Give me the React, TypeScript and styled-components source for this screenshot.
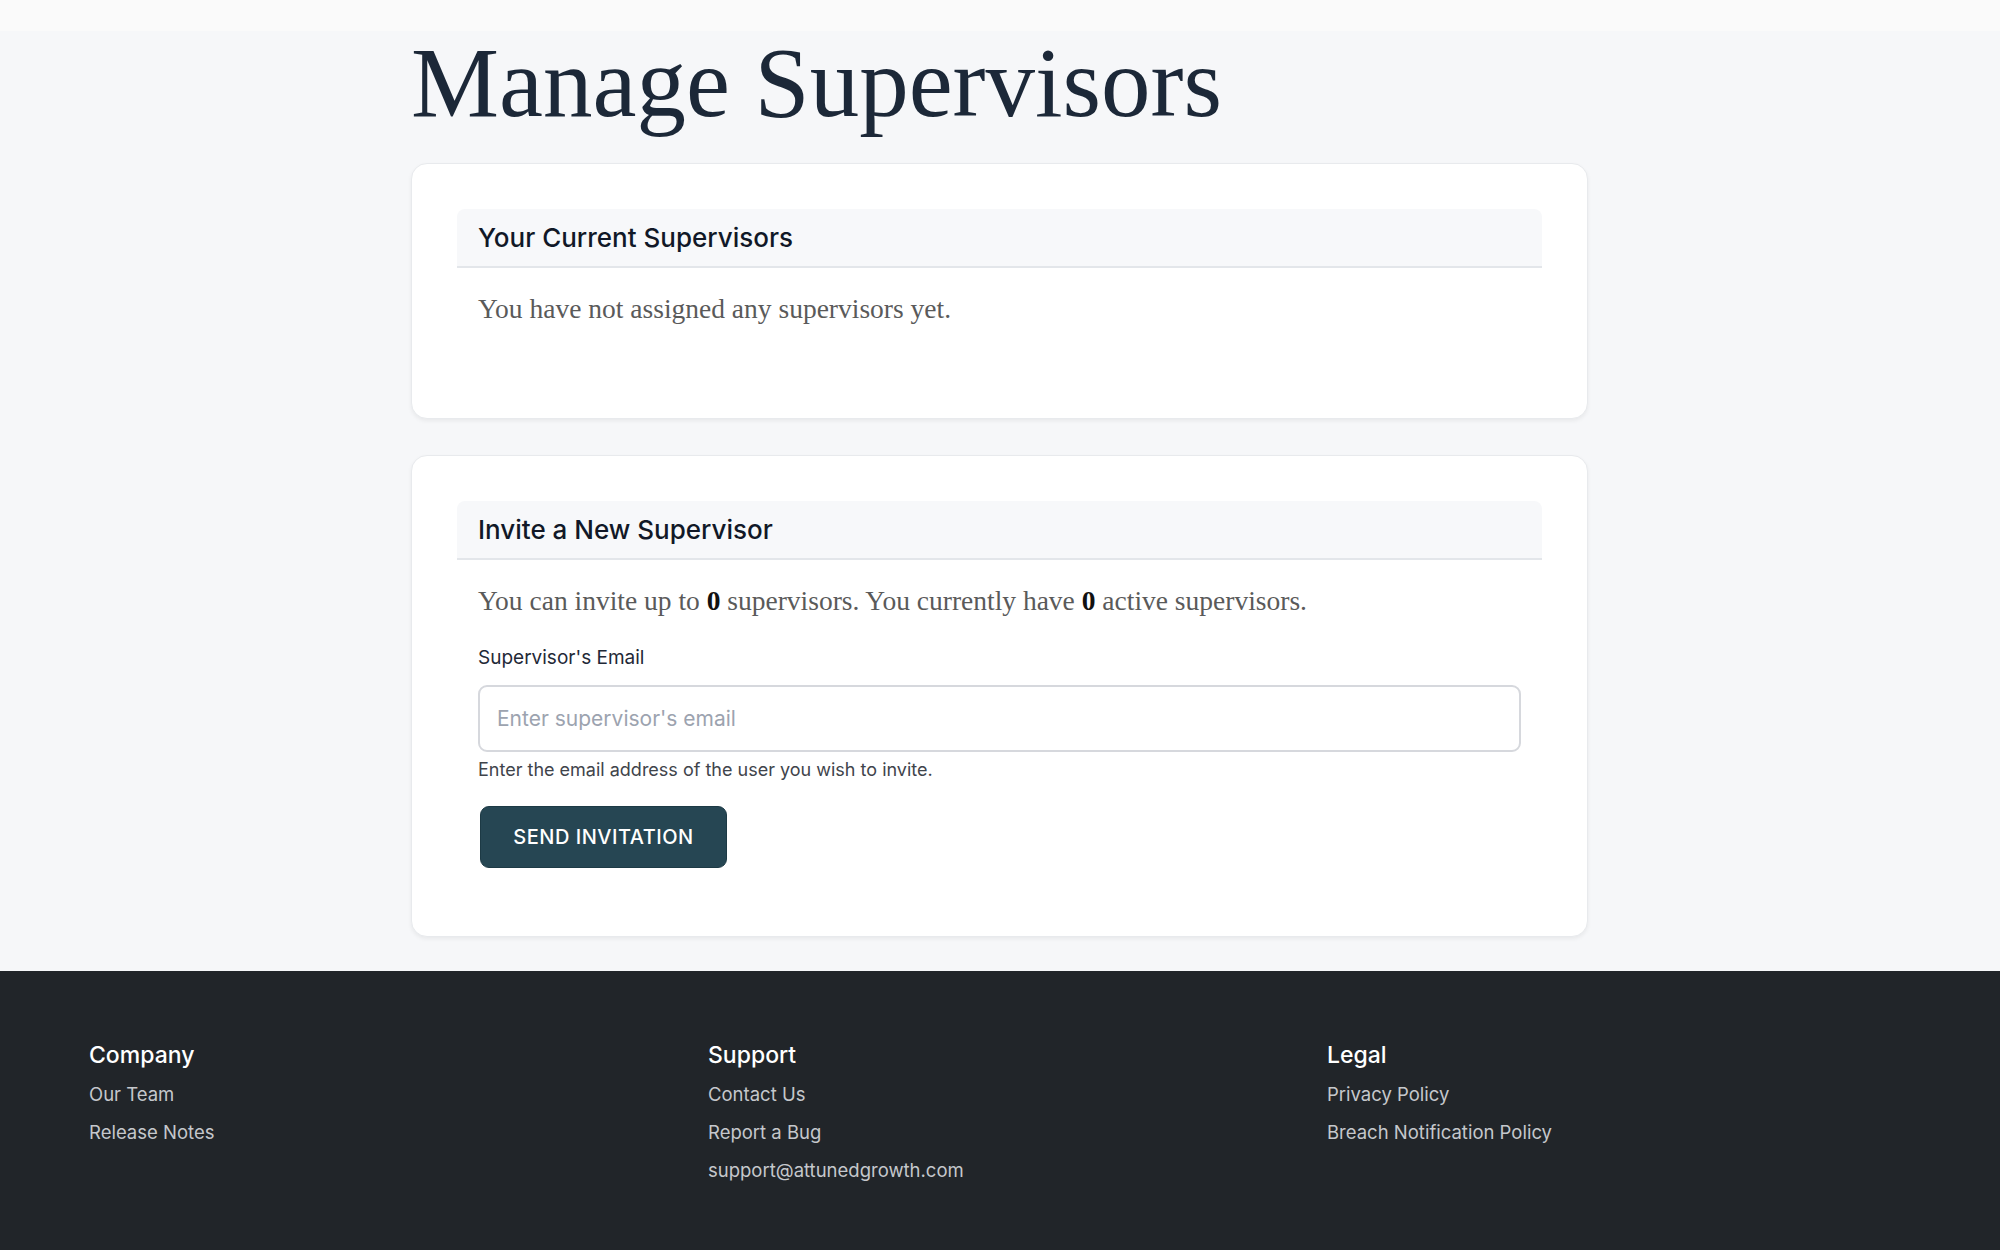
import styled, { createGlobalStyle } from "styled-components";
import { FC } from "react";

const GlobalStyle = createGlobalStyle`
    html, body {
        margin: 0;
        padding: 0;
        background: #f6f7f9;
    }
    body {
        font-family: Inter, "Noto Sans", sans-serif;
        color: #1f2937;
    }
    * {
        box-sizing: border-box;
    }
`;

const footerColumns = [
    { title: "Company", links: ["Our Team", "Release Notes"] },
    { title: "Support", links: ["Contact Us", "Report a Bug", "support@attunedgrowth.com"] },
    { title: "Legal", links: ["Privacy Policy", "Breach Notification Policy"] },
];

const App: FC = () => {
    return <>
        <GlobalStyle />
        <TopBar />
        <Main>
            <Title>Manage Supervisors</Title>
            <Card>
                <CardHeader>
                    <CardTitle>Your Current Supervisors</CardTitle>
                </CardHeader>
                <BodyText $spacing={43}>You have not assigned any supervisors yet.</BodyText>
            </Card>
            <Card $extraBottom={22}>
                <CardHeader>
                    <CardTitle>Invite a New Supervisor</CardTitle>
                </CardHeader>
                <BodyText $spacing={23}>
                    You can invite up to <b>0</b> supervisors. You currently have <b>0</b> active supervisors.
                </BodyText>
                <Field>
                    <Label htmlFor="supervisor-email">Supervisor's Email</Label>
                    <EmailInput id="supervisor-email" type="email" placeholder="Enter supervisor's email" />
                    <Hint>Enter the email address of the user you wish to invite.</Hint>
                </Field>
                <SendButton type="button">SEND INVITATION</SendButton>
            </Card>
        </Main>
        <Footer>
            {footerColumns.map((col) => (
                <FooterColumn key={col.title}>
                    <FooterHeading>{col.title}</FooterHeading>
                    {col.links.map((link) => (
                        <FooterLink key={link} href="#">{link}</FooterLink>
                    ))}
                </FooterColumn>
            ))}
        </Footer>
    </>
}

const TopBar = styled.div`
    height: 31px;
    background: #fafafa;
`;

const Main = styled.main`
    width: 1177px;
    margin: 0 auto 0 411px;
    padding-bottom: 34px;
    display: flex;
    flex-direction: column;
    gap: 36px;
`;

const Title = styled.h1`
    margin: 0 0 -8px;
    font-family: "Liberation Serif", serif;
    font-weight: 400;
    font-size: 99px;
    line-height: 104px;
    color: #1c2838;
`;

const Card = styled.section<{ $extraBottom?: number }>`
    background: #fff;
    border: 1px solid #e8eaed;
    border-radius: 16px;
    box-shadow: 0 2px 4px rgba(0, 0, 0, 0.06);
    padding: 45px 45px ${(p) => 46 + (p.$extraBottom ?? 0)}px;
`;

const CardHeader = styled.div`
    background: #f7f8fa;
    border-bottom: 2px solid #e3e6ea;
    border-radius: 8px 8px 0 0;
    height: 59px;
    padding: 0 21px;
    display: flex;
    align-items: center;
`;

const CardTitle = styled.h2`
    margin: 0;
    font-size: 26px;
    font-weight: 500;
    color: #111827;
`;

const BodyText = styled.p<{ $spacing: number }>`
    margin: 21px 0 ${(p) => p.$spacing}px;
    padding: 0 21px;
    font-family: "Liberation Serif", serif;
    font-size: 27.5px;
    line-height: 40px;
    color: #5a5a5a;

    b {
        color: #111;
        font-weight: 700;
    }
`;

const Field = styled.div`
    display: flex;
    flex-direction: column;
    padding: 0 21px;
`;

const Label = styled.label`
    font-size: 19px;
    line-height: 28px;
    color: #1f2937;
    margin-bottom: 13px;
`;

const EmailInput = styled.input`
    height: 67px;
    width: 100%;
    border: 2px solid #d6d8dd;
    border-radius: 9px;
    padding: 0 17px;
    font-family: Inter, sans-serif;
    font-size: 21px;
    color: #1f2937;
    outline: none;

    &::placeholder {
        color: #9ca3af;
    }
`;

const Hint = styled.small`
    margin-top: 4px;
    font-size: 18px;
    line-height: 27px;
    color: #3f444b;
`;

const SendButton = styled.button`
    margin: 23px 0 0 23px;
    width: 247px;
    height: 62px;
    background: #264653;
    border: 1px solid #1d3a45;
    border-radius: 9px;
    color: #fff;
    font-family: Inter, sans-serif;
    font-size: 20px;
    font-weight: 500;
    letter-spacing: 0.025em;
    cursor: pointer;
`;

const Footer = styled.footer`
    background: #212529;
    min-height: 281px;
    padding: 70px 54px 60px 89px;
    display: grid;
    grid-template-columns: repeat(3, 619px);
`;

const FooterColumn = styled.div`
    display: flex;
    flex-direction: column;
`;

const FooterHeading = styled.h3`
    margin: 0 0 6px;
    font-size: 23px;
    font-weight: 500;
    line-height: 28px;
    color: #fff;
`;

const FooterLink = styled.a`
    font-size: 18.5px;
    line-height: 38px;
    color: #c5c8cc;
    text-decoration: none;
`;

export default App;
